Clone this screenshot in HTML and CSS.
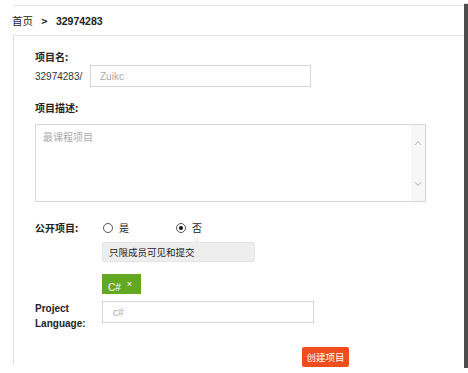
FILE: index.html
```html
<!DOCTYPE html>
<html lang="zh-CN">
  <head>
    <meta charset="UTF-8" />
    <meta name="viewport" content="width=device-width, initial-scale=1.0" />
    <title>创建项目</title>
    <link rel="stylesheet" href="styles.css">
  </head>
  <body>
    <div class="shot">
      <div class="topline"></div>
      <div class="crumb">
        <span>首页</span>
        <span class="sep">&gt;</span>
        <b>32974283</b>
      </div>

      <div class="card">
        <div class="label">项目名:</div>
        <div class="name-row">
          <span class="prefix">32974283/</span>
          <input class="field name-input" type="text" placeholder="Zuikc" />
        </div>

        <div class="label desc-label">项目描述:</div>
        <div class="desc-box">
          <textarea placeholder="最课程项目"></textarea>
          <div class="scroll">
            <svg width="8" height="6" viewBox="0 0 8 6"><path d="M1 5 L4 1.5 L7 5" fill="none" stroke="#b5b5b5" stroke-width="1"/></svg>
            <svg width="8" height="6" viewBox="0 0 8 6"><path d="M1 1 L4 4.5 L7 1" fill="none" stroke="#b5b5b5" stroke-width="1"/></svg>
          </div>
        </div>

        <div class="form-row public-row">
          <span class="label-col">公开项目:</span>
          <div class="public-opts">
            <div class="radios">
              <label class="radio first"><span class="dot"></span>是</label>
              <label class="radio checked"><span class="dot"></span>否</label>
            </div>
            <div class="tip">只限成员可见和提交</div>
          </div>
        </div>

        <div class="tag-row">
          <span class="tag">C#<sup>×</sup></span>
        </div>

        <div class="form-row lang-row">
          <span class="label-col lang-label">Project<br>Language:</span>
          <input class="field lang-input" type="text" placeholder="c#" />
        </div>

        <div class="actions">
          <button class="btn-create">创建项目</button>
        </div>
      </div>
    </div>
  </body>
</html>
```

FILE: styles.css
```css
* {
  margin: 0;
  padding: 0;
  box-sizing: border-box;
}
body {
  background-color: white;
  font-family: "Noto Sans CJK SC", "Liberation Sans", sans-serif;
  font-size: 10px;
  color: #333;
}

/* screenshot frame with the snip shadow */
.shot {
  width: 464px;
  height: 368px;
  overflow: hidden;
  background: white;
  box-shadow: 4px 4px 1px rgba(0, 0, 0, 0.7);
}
.topline {
  margin: 5px 0 0 13px;
  border-top: 1px solid #e6e6e6;
}
.crumb {
  height: 29px;
  line-height: 29px;
  padding-left: 12px;
  font-size: 10.5px;
  color: #222;
}
.crumb .sep {
  margin: 0 6px 0 6px;
  font-weight: bold;
}
.crumb b {
  font-family: "Liberation Sans", sans-serif;
  font-size: 10.5px;
}

.card {
  margin-left: 13px;
  height: 330px;
  border-top: 1px solid #e2e2e2;
  border-left: 1px solid #e2e2e2;
  padding: 13px 0 0 21px;
}
.label {
  font-weight: bold;
  line-height: 16px;
  color: #222;
}
.name-row {
  display: flex;
  align-items: center;
}
.prefix {
  width: 55px;
  font-family: "Liberation Sans", sans-serif;
  font-size: 10px;
}
.field {
  height: 22px;
  border: 1px solid #d6d6d6;
  font-family: "Liberation Sans", sans-serif;
  font-size: 10px;
  color: #333;
  outline: none;
}
.field::placeholder {
  color: #aaa;
}
.name-input {
  width: 221px;
  padding-left: 9px;
}
.desc-label {
  margin-top: 13px;
}
.desc-box {
  margin-top: 8px;
  width: 391px;
  height: 78px;
  display: flex;
  border: 1px solid #d6d6d6;
}
.desc-box textarea {
  flex: 1;
  border: none;
  resize: none;
  outline: none;
  padding: 5px 7px;
  font-family: "Noto Sans CJK SC", sans-serif;
  font-size: 10px;
  line-height: 14px;
}
.desc-box textarea::placeholder {
  color: #aaa;
}
.scroll {
  width: 14px;
  background: #f7f7f7;
  display: flex;
  flex-direction: column;
  justify-content: space-between;
  align-items: center;
  padding: 15px 0 14px;
}

.form-row {
  display: flex;
  align-items: flex-start;
}
.label-col {
  width: 67px;
  font-weight: bold;
  color: #222;
  line-height: 16px;
}
.public-row {
  margin-top: 18px;
}
.radios {
  display: flex;
  line-height: 16px;
  margin-left: 1px;
}
.radio {
  display: flex;
  align-items: center;
  gap: 6px;
  color: #222;
}
.radio.first {
  width: 73px;
}
.dot {
  width: 10px;
  height: 10px;
  border: 1px solid #555;
  border-radius: 50%;
  display: flex;
  align-items: center;
  justify-content: center;
}
.radio.checked .dot::after {
  content: "";
  width: 4px;
  height: 4px;
  border-radius: 50%;
  background: #111;
}
.tip {
  position: relative;
  margin-top: 6px;
  width: 153px;
  height: 20px;
  line-height: 18px;
  padding-left: 6px;
  background: #eeeeee;
  border: 1px solid #e4e4e4;
  border-radius: 2px;
  font-size: 9.5px;
  color: #222;
}
.tip::before {
  content: "";
  position: absolute;
  left: 90px;
  top: -5px;
  border-left: 4px solid transparent;
  border-right: 4px solid transparent;
  border-bottom: 5px solid #eeeeee;
}

.tag-row {
  margin-top: 12px;
  padding-left: 67px;
}
.tag {
  display: inline-block;
  height: 20px;
  width: 39px;
  line-height: 20px;
  padding-left: 6px;
  background: #62a822;
  color: white;
  font-family: "Liberation Sans", sans-serif;
  font-size: 10px;
}
.tag sup {
  margin-left: 6px;
  font-size: 9px;
  vertical-align: 4px;
}

.lang-row {
  margin-top: 7px;
}
.lang-label {
  font-family: "Liberation Sans", sans-serif;
  line-height: 15px;
}
.lang-input {
  width: 212px;
  padding-left: 10px;
}

.actions {
  margin-top: 16px;
  padding-left: 267px;
}
.btn-create {
  width: 47px;
  height: 20px;
  border: none;
  border-radius: 2px;
  background: #ef4d1b;
  color: white;
  font-family: "Noto Sans CJK SC", sans-serif;
  font-size: 9.5px;
}
```
